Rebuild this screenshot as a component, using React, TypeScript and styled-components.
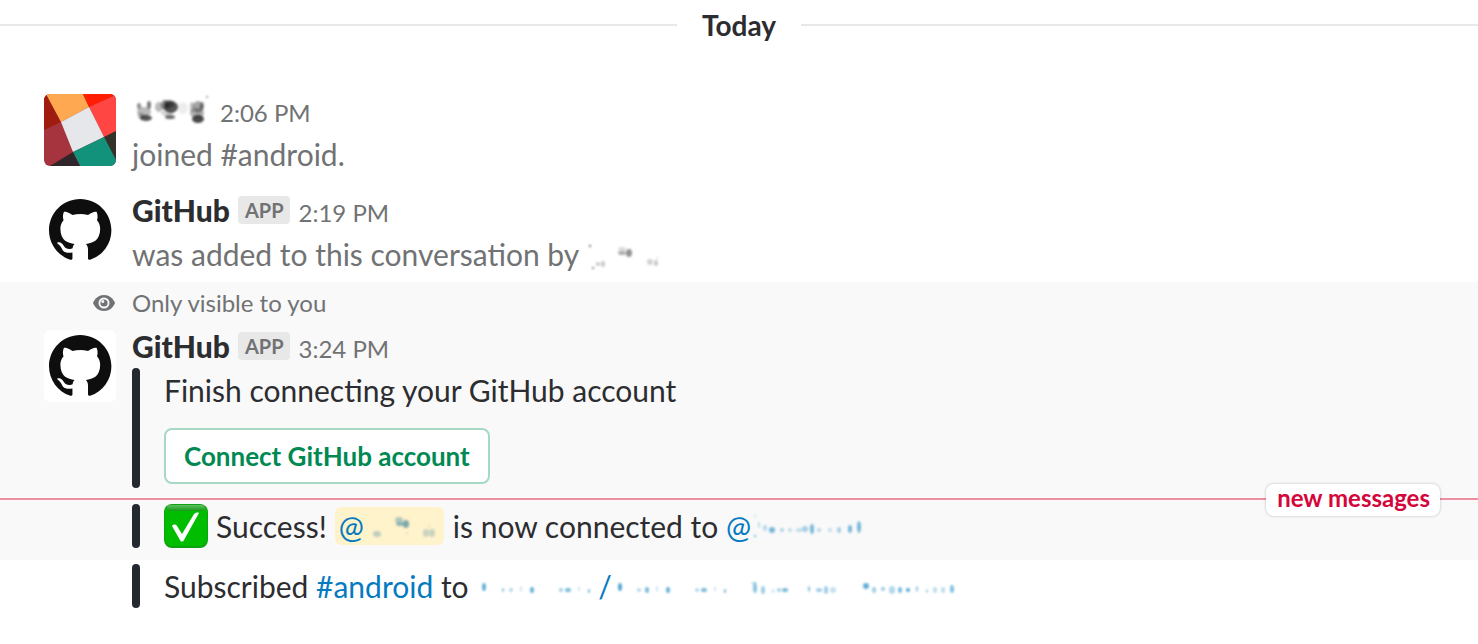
import React from "react";
import styled, { createGlobalStyle, css } from "styled-components";

const GlobalStyle = createGlobalStyle`
  * { box-sizing: border-box; }
  body {
    margin: 0;
    background: #fff;
    color: #2c2d30;
    font-family: Lato, "Liberation Sans", sans-serif;
    font-size: 30px;
    line-height: 44px;
  }
`;

const Feed = styled.main`
  display: flex;
  flex-direction: column;
  padding-bottom: 36px;
`;

const DayDivider = styled.h2`
  display: flex;
  align-items: center;
  gap: 25px;
  margin: 0 0 32px;
  height: 50px;
  font-size: 28px;
  font-weight: 700;
  &::before, &::after {
    content: "";
    flex: 1;
    height: 2px;
    background: #e8e8e8;
  }
`;

const Message = styled.article`
  display: grid;
  grid-template-columns: 72px minmax(0, 1fr);
  column-gap: 16px;
  padding: 7px 44px 6px;
`;

const Ephemeral = styled.section`
  background: #f9f9f9;
`;

const avatarBox = css`
  display: block;
  width: 72px;
  height: 72px;
  margin-top: 5px;
  border-radius: 6px;
  background: #fff;
`;

const AvatarSvg = styled.svg`${avatarBox}`;

const Header = styled.header`
  display: flex;
  align-items: center;
  height: 42px;
  margin-bottom: 1px;
`;

const Author = styled.span`
  font-weight: 900;
  margin-right: 8px;
`;

const Badge = styled.span`
  padding: 0 6px 0 7px;
  margin-right: 9px;
  border-radius: 4px;
  background: #e8e8e8;
  color: #717274;
  font-size: 20px;
  font-weight: 700;
  line-height: 28px;
`;

const Time = styled.time`
  color: #717274;
  font-size: 24px;
  padding-top: 6px;
`;

const Text = styled.p<{ $muted?: boolean }>`
  margin: 0;
  color: ${(p) => (p.$muted ? "#717274" : "inherit")};
`;

const Notice = styled.div`
  display: grid;
  grid-template-columns: 72px 1fr;
  column-gap: 16px;
  align-items: center;
  padding: 3px 44px 0;
  color: #717274;
  font-size: 24px;
  line-height: 36px;
`;

const Eye = styled.svg`
  justify-self: end;
  display: block;
`;

const Attachment = styled.div`
  position: relative;
  display: flex;
  flex-direction: column;
  align-items: flex-start;
  padding-left: 32px;
  &::before {
    content: "";
    position: absolute;
    inset: 0 auto 0 0;
    width: 8px;
    border-radius: 4px;
    background: #24292f;
  }
`;

const CardAttachment = styled(Attachment)`
  padding-bottom: 4px;
`;

const EphemeralMessage = styled(Message)`
  padding-top: 4px;
  padding-bottom: 10px;
`;

const ConnectButton = styled.button`
  margin-top: 16px;
  padding: 0 18px;
  border: 2px solid #a6d8c3;
  border-radius: 8px;
  background: #fff;
  color: #008952;
  font: 700 26px/52px Lato, "Liberation Sans", sans-serif;
  cursor: pointer;
`;

const NewDivider = styled.div`
  display: flex;
  justify-content: flex-end;
  align-items: center;
  height: 2px;
  padding-right: 38px;
  background: #ec8fa3;
`;

const NewLabel = styled.span`
  margin-top: 2px;
  padding: 0 10px 4px 11px;
  border-radius: 8px;
  background: #fff;
  box-shadow: 0 0 3px rgba(0, 0, 0, 0.25);
  color: #d4063b;
  font-size: 24px;
  font-weight: 700;
  line-height: 28px;
`;

const FollowUp = styled.article<{ $bottom: number }>`
  padding: 4px 44px ${(p) => p.$bottom}px 132px;
`;

const Line = styled.p`
  display: flex;
  align-items: center;
  margin: 0;
  white-space: pre;
`;

const Emoji = styled.svg`
  display: block;
  margin-right: 8px;
`;

const Link = styled.a`
  display: inline-flex;
  align-items: center;
  color: #057abf;
  text-decoration: none;
`;

const Mention = styled(Link)`
  height: 38px;
  margin: 0 9px 0 8px;
  padding: 0 4px;
  border-radius: 6px;
  background: #fff3cc;
`;

const SmudgeSvg = styled.svg`
  display: inline-block;
  vertical-align: middle;
  flex: none;
`;

const SmudgeShapes = styled.g`
  filter: blur(1px);
`;

type Dot = [x: number, y: number, rx: number, ry: number, opacity: number];

interface SmudgeProps {
  width: number;
  color: string;
  dots: Dot[];
  label: string;
  drop?: number;
}

function Smudge({ width, color, dots, label, drop = 0 }: SmudgeProps) {
  return (
    <SmudgeSvg width={width} height={36} viewBox={`0 ${-drop} ${width} 36`} role="img" aria-label={label}>
      <SmudgeShapes fill={color}>
        {dots.map(([x, y, rx, ry, o], i) => (
          <ellipse key={i} cx={x} cy={y} rx={rx} ry={ry} opacity={o} />
        ))}
      </SmudgeShapes>
    </SmudgeSvg>
  );
}

const userDots: Dot[] = [
  [7, 14, 2, 3, 0.5], [17, 13, 2, 4, 0.6], [12, 20, 7, 5, 0.3], [14, 26, 6, 3, 0.75], [9, 24, 3, 3, 0.3],
  [27, 15, 4, 5, 0.3], [33, 13, 4, 5, 0.5], [39, 15, 7, 6, 0.75], [37, 12, 5, 4, 0.5], [35, 21, 6, 3, 0.2],
  [38, 25, 5, 2, 0.65], [51, 16, 5, 6, 0.08],
  [60, 15, 2, 5, 0.3], [66, 15, 5, 6, 0.4], [70, 14, 2, 4, 0.5], [65, 21, 7, 5, 0.35], [66, 27, 6, 4, 0.8], [75, 5, 1, 1, 0.5],
];
const inviterDots: Dot[] = [
  [11, 6, 1, 1, 1], [14, 28, 1, 1, 0.9], [19, 24, 2, 2, 0.3], [24, 24, 2, 3, 0.3],
  [43, 9, 4, 2, 0.2], [43, 13, 4, 2, 0.45], [50, 13, 3, 4, 0.6], [71, 22, 3, 3, 0.25], [77, 23, 2, 3, 0.3], [78, 18, 1, 1, 0.2],
];
const mentionDots: Dot[] = [
  [13, 25, 4, 3, 0.3], [35, 11, 4, 3, 0.35], [36, 15, 4, 2, 0.5], [42, 15, 3, 4, 0.6], [43, 24, 1, 1, 0.2],
  [62, 24, 3, 4, 0.25], [68, 24, 3, 4, 0.25], [65, 17, 1, 1, 0.2],
];
const handleDots: Dot[] = [
  [4, 6, 1, 1, 0.3], [8, 15, 1, 3, 0.35], [14, 18, 2, 3, 0.35], [21, 20, 3, 3, 0.7], [31, 20, 2, 2, 0.4],
  [39, 20, 2, 2, 0.3], [48, 20, 3, 2, 0.3], [54, 19, 3, 3, 0.45], [61, 19, 2, 5, 0.7], [68, 20, 2, 2, 0.35],
  [79, 20, 2, 2, 0.3], [88, 20, 2, 3, 0.45], [99, 19, 2, 4, 0.7], [108, 17, 2, 6, 0.7], [4, 26, 1, 1, 0.9],
];
const ownerDots: Dot[] = [
  [8, 16, 2, 4, 0.8], [27, 19, 1, 2, 0.7], [35, 19, 2, 2, 0.4], [45, 18, 1, 3, 0.3], [56, 19, 2, 3, 0.8],
  [85, 19, 2, 2, 0.5], [92, 19, 3, 2, 0.7], [103, 18, 1, 2, 0.3], [113, 20, 1, 2, 0.8],
];
const repoDots: Dot[] = [
  [8, 16, 2, 4, 0.9], [27, 19, 2, 2, 0.4], [35, 19, 2, 3, 0.7], [45, 18, 1, 3, 0.3], [56, 19, 2, 3, 0.8],
  [85, 19, 2, 2, 0.4], [92, 19, 3, 2, 0.7], [103, 18, 1, 2, 0.3], [113, 20, 1, 2, 0.8],
  [142, 12, 3, 1, 0.4], [143, 17, 2, 5, 0.6], [151, 19, 2, 4, 0.5], [161, 20, 2, 2, 0.2], [167, 19, 2, 2, 0.5], [173, 19, 3, 2, 0.7],
  [197, 18, 1, 3, 0.7], [207, 19, 3, 2, 0.5], [214, 19, 2, 4, 0.5], [221, 19, 3, 3, 0.3],
  [254, 15, 3, 3, 0.8], [262, 19, 2, 3, 0.5], [271, 18, 2, 2, 0.55], [280, 19, 3, 4, 0.4], [288, 19, 2, 3, 0.7],
  [296, 19, 2, 2, 0.9], [305, 18, 1, 3, 0.6], [315, 20, 1, 2, 0.5], [323, 19, 2, 3, 0.35], [331, 19, 2, 3, 0.35], [340, 18, 2, 4, 0.65],
];

function UserAvatar() {
  return (
    <AvatarSvg viewBox="0 0 72 72" role="img" aria-label="User avatar">
      <rect width="72" height="72" fill="#a5343f" />
      <path d="M0 0H3L17 28L0 36Z" fill="#9e1d10" />
      <path d="M2 0H39L45 13L17 28Z" fill="#ffa852" />
      <path d="M39 0H72V1L45 13Z" fill="#ff1d04" />
      <path d="M45 13L72 1V37L60 43Z" fill="#ff4643" />
      <path d="M17 28L45 13L60 43L29 58Z" fill="#e5e7ea" />
      <path d="M60 43L72 37V67Z" fill="#34312b" />
      <path d="M29 58L60 43L72 66V72H36Z" fill="#12917b" />
      <path d="M6 72L29 58L36 72Z" fill="#302528" />
    </AvatarSvg>
  );
}

function GitHubAvatar() {
  return (
    <AvatarSvg viewBox="0 0 72 72" role="img" aria-label="GitHub">
      <path
        transform="translate(5 5) scale(3.9)"
        fill="#0d0e0d"
        d="M8 0C3.58 0 0 3.58 0 8c0 3.54 2.29 6.53 5.47 7.59.4.07.55-.17.55-.38 0-.19-.01-.82-.01-1.49-2.01.37-2.53-.49-2.69-.94-.09-.23-.48-.94-.82-1.13-.28-.15-.68-.52-.01-.53.63-.01 1.08.58 1.23.82.72 1.21 1.87.87 2.33.66.07-.52.28-.87.51-1.07-1.78-.2-3.64-.89-3.64-3.95 0-.87.31-1.59.82-2.15-.08-.2-.36-1.02.08-2.12 0 0 .67-.21 2.2.82.64-.18 1.32-.27 2-.27s1.36.09 2 .27c1.53-1.04 2.2-.82 2.2-.82.44 1.1.16 1.92.08 2.12.51.56.82 1.27.82 2.15 0 3.07-1.87 3.75-3.65 3.95.29.25.54.73.54 1.48 0 1.07-.01 1.93-.01 2.2 0 .21.15.46.55.38A8.01 8.01 0 0 0 16 8c0-4.42-3.58-8-8-8z"
      />
    </AvatarSvg>
  );
}

function AppHeader({ time }: { time: string }) {
  return (
    <Header>
      <Author>GitHub</Author>
      <Badge>APP</Badge>
      <Time>{time}</Time>
    </Header>
  );
}

export default function App() {
  return (
    <>
      <GlobalStyle />
      <Feed>
        <DayDivider>Today</DayDivider>

        <Message>
          <UserAvatar />
          <div>
            <Header>
              <Smudge width={88} color="#1c1c1c" dots={userDots} label="Hidden name" />
              <Time>2:06 PM</Time>
            </Header>
            <Text $muted>joined #android.</Text>
          </div>
        </Message>

        <Message>
          <GitHubAvatar />
          <div>
            <AppHeader time="2:19 PM" />
            <Text $muted>
              was added to this conversation by
              <Smudge width={84} color="#4a4a4a" dots={inviterDots} label="Hidden name" />
            </Text>
          </div>
        </Message>

        <Ephemeral>
          <Notice>
            <Eye width="24" height="18" viewBox="0 0 24 18" aria-hidden="true">
              <path d="M1 9C3 4 7 1 12 1s9 3 11 8c-2 5-6 8-11 8S3 14 1 9Z" fill="#717274" />
              <circle cx="12" cy="9" r="5.5" fill="#f9f9f9" />
              <circle cx="12" cy="9" r="3.6" fill="#717274" />
              <circle cx="10.8" cy="7.6" r="1.5" fill="#f9f9f9" />
            </Eye>
            <span>Only visible to you</span>
          </Notice>
          <EphemeralMessage>
            <GitHubAvatar />
            <div>
              <AppHeader time="3:24 PM" />
              <CardAttachment>
                <Text>Finish connecting your GitHub account</Text>
                <ConnectButton type="button">Connect GitHub account</ConnectButton>
              </CardAttachment>
            </div>
          </EphemeralMessage>
          <NewDivider>
            <NewLabel>new messages</NewLabel>
          </NewDivider>
          <FollowUp $bottom={12}>
            <Attachment>
              <Line>
                <Emoji width="44" height="44" viewBox="0 0 44 44" role="img" aria-label="Check mark">
                  <defs>
                    <linearGradient id="gloss" x1="0" y1="0" x2="0" y2="1">
                      <stop offset="0" stopColor="#5fbf62" />
                      <stop offset="1" stopColor="#149a18" />
                    </linearGradient>
                  </defs>
                  <rect x="0" y="0" width="44" height="44" rx="8" fill="#0da312" />
                  <rect x="1" y="1" width="42" height="41" rx="7" fill="#00bd00" />
                  <rect x="3" y="1" width="38" height="6" rx="3" fill="url(#gloss)" />
                  <path d="M8 22C9 20 12 20 13 22L18 30L30 10C31 9 34 8 35 9L20 36C19 38 17 38 16 36Z" fill="#fff" />
                </Emoji>
                <span>Success!</span>
                <Mention href="#user">
                  @<Smudge width={76} color="#24789a" dots={mentionDots} label="hidden user" drop={1} />
                </Mention>
                <span>is now connected to </span>
                <Link href="#account">
                  @<Smudge width={114} color="#3d9bcb" dots={handleDots} label="hidden account" drop={2} />
                </Link>
              </Line>
            </Attachment>
          </FollowUp>
        </Ephemeral>

        <FollowUp $bottom={0}>
          <Attachment>
            <Line>
              <span>Subscribed </span>
              <Link href="#android">#android</Link>
              <span> to </span>
              <Link href="#repository">
                <Smudge width={122} color="#3d9bcb" dots={ownerDots} label="hidden owner" drop={3} />/
                <Smudge width={348} color="#3d9bcb" dots={repoDots} label="hidden repository" drop={3} />
              </Link>
            </Line>
          </Attachment>
        </FollowUp>
      </Feed>
    </>
  );
}
